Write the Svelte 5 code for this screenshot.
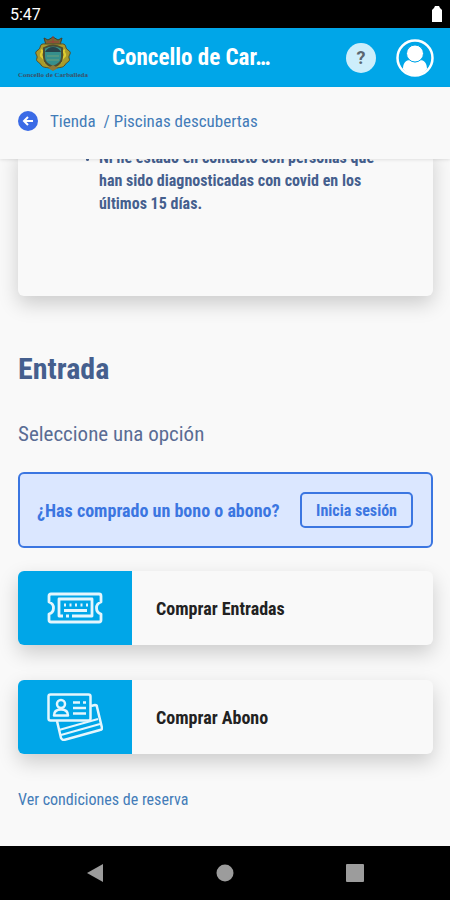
<script>
  let time = "5:47";
  let title = "Concello de Car…";

  let options = [
    { id: "ticket", label: "Comprar Entradas" },
    { id: "pass", label: "Comprar Abono" },
  ];
</script>

<div class="screen">
  <div class="status">
    <span>{time}</span>
    <svg width="10" height="16" viewBox="0 0 10 16" fill="#fff">
      <path d="M3 0h4l1 2 2 2v12H0V4l2-2z" />
    </svg>
  </div>

  <header>
    <a class="logo" href="/" aria-label="Inicio">
      <svg width="40" height="36" viewBox="0 0 40 36">
        <path d="M11 2l4 2 5-3 5 3 4-2-2 7H13z" fill="#746b35" stroke="#433f2b" />
        <path d="M14 6h12M20 0v7" stroke="#a33d38" stroke-width="1" />
        <path d="M13 8C5 7 9 12 5 14c-5 3 0 5-1 8-2 4 3 4 4 7 3 4 7 1 12 5 5-4 9-1 12-5 1-3 6-3 4-7-1-3 4-5-1-8-4-2 0-7-8-6z" fill="#a99b2c" stroke="#514d2d" />
        <path d="M8 14c4 2-3 4 1 7s1 5 5 7M32 14c-4 2 3 4-1 7s-1 5-5 7" fill="none" stroke="#e0cd32" stroke-width="2" />
        <path d="M11 12q9-5 18 0v9q0 7-9 10-9-3-9-10z" fill="#368f8c" stroke="#4c4c32" stroke-width="2" />
        <path d="M12 16q3-5 8-5t8 5z" fill="#26434b" />
        <path d="M14 20h12M14 24h12" stroke="#6ea07a" />
        <path d="M15 32l5-3 5 3-5 3z" fill="#8d7938" />
      </svg>
      <span>Concello de Carballeda</span>
    </a>
    <h1>{title}</h1>
    <button class="help" aria-label="Ayuda">?</button>
    <button class="user" aria-label="Mi cuenta">
      <svg width="38" height="38" viewBox="0 0 38 38">
        <circle cx="19" cy="19" r="17.5" fill="none" stroke="#fff" stroke-width="2.5" />
        <path d="M7 30c0-6 3-9 7-9 3 3 7 3 10 0 4 0 7 3 7 9-6 8-18 8-24 0z" fill="#fff" />
        <circle cx="19" cy="14.500" r="8.500" fill="#fff" stroke="#00a6e8" stroke-width="1" />
      </svg>
    </button>
  </header>

  <nav class="crumbs">
    <button class="back" aria-label="Volver">
      <svg width="20" height="20" viewBox="0 0 20 20">
        <circle cx="10" cy="10" r="10" fill="#3b6be6" />
        <path d="M15 10H6M10 6l-4 4 4 4" fill="none" stroke="#fff" stroke-width="2" />
      </svg>
    </button>
    <a href="/tienda">Tienda</a>
    <span>/ Piscinas descubertas</span>
  </nav>

  <main>
    <section class="info">
      <ul>
        <li>Ni he estado en contacto con personas que han sido diagnosticadas con covid en los últimos 15 días.</li>
      </ul>
    </section>

    <h2>Entrada</h2>
    <p class="hint">Seleccione una opción</p>

    <div class="login">
      <span>¿Has comprado un bono o abono?</span>
      <button>Inicia sesión</button>
    </div>

    {#each options as option (option.id)}
      <button class="option">
        <span class="icon">
          {#if option.id === "ticket"}
            <svg width="56" height="32" viewBox="0 0 56 32" fill="none" stroke="#e4f6fd" stroke-width="2.800" stroke-linejoin="round">
              <path d="M4 2h48q2 0 2 2v6c-6 2-6 10 0 12v6q0 2-2 2H4q-2 0-2-2v-6c6-2 6-10 0-12V4q0-2 2-2z" />
              <path d="M16 24h-4V7h33v17H25M19 24h3" />
              <path d="M17 13h25" stroke-dasharray="2 3.500" />
              <path d="M17 18.500h23" />
            </svg>
          {:else}
            <svg width="56" height="48" viewBox="0 0 56 48" fill="none" stroke="#e4f6fd" stroke-width="2.500" stroke-linejoin="round">
              <rect x="1.500" y="1.500" width="42" height="26" rx="2" />
              <path d="M7 22.500c0-4 3-6 7-6s7 2 7 6z" />
              <circle cx="14" cy="11" r="4" />
              <path d="M26 9.500h7M36 9.500h3M26 15h13M26 20.500h13" />
              <path d="M44 13l4-1q2 0 2 2l5 21q0 2-2 2l-36 10q-2 0-3-2l-4-17" />
              <path d="M12 37l39-11M14 42l39-11" stroke-width="2" />
            </svg>
          {/if}
        </span>
        <span class="label">{option.label}</span>
      </button>
    {/each}

    <a class="terms" href="/condiciones">Ver condiciones de reserva</a>
  </main>

  <div class="android">
    <button aria-label="Atrás">
      <svg width="18" height="20" viewBox="0 0 18 20"><path d="M17 1v18L1 10z" fill="#9c9c9c" /></svg>
    </button>
    <button aria-label="Inicio">
      <svg width="18" height="18" viewBox="0 0 18 18"><circle cx="9" cy="9" r="8.500" fill="#9c9c9c" /></svg>
    </button>
    <button aria-label="Recientes">
      <svg width="18" height="18" viewBox="0 0 18 18"><rect width="18" height="18" rx="1" fill="#9c9c9c" /></svg>
    </button>
  </div>
</div>

<style>
:global(body) {
  margin: 0;
  background: #f9f9f9;
}

.screen {
  display: flex;
  flex-direction: column;
  height: 100vh;
  overflow: hidden;
  font-family: "Roboto Condensed", "Liberation Sans Narrow", Roboto, sans-serif;
  color: #455f8e;
}

button {
  padding: 0;
  border: 0;
  background: none;
  font-family: inherit;
  cursor: pointer;
}

a {
  color: #437cb8;
  text-decoration: none;
}

svg {
  display: block;
}

.status {
  display: flex;
  align-items: center;
  justify-content: space-between;
  flex: none;
  height: 28px;
  padding: 0 8px 0 10px;
  background: #000;
  color: #fff;
  font-family: Roboto, sans-serif;
  font-size: 16px;
}

header {
  display: flex;
  align-items: center;
  flex: none;
  height: 59px;
  padding: 0 16px 0 18px;
  background: #00a6e8;
}

.logo {
  display: flex;
  flex-direction: column;
  align-items: center;
  width: 70px;
  color: #3c5269;
  font-family: "Liberation Serif", serif;
  font-size: 7px;
  font-weight: bold;
  line-height: 7px;
  white-space: nowrap;
}

h1 {
  flex: 1;
  margin: 0 0 0 24px;
  color: #fff;
  font-size: 23px;
  line-height: 32px;
  white-space: nowrap;
}

.help {
  width: 30px;
  height: 30px;
  margin-right: 20px;
  border-radius: 50%;
  background: #cdeefb;
  color: #5b6770;
  font-family: Roboto, sans-serif;
  font-size: 18px;
  font-weight: bold;
}

.crumbs {
  display: flex;
  align-items: center;
  flex: none;
  z-index: 1;
  height: 72px;
  padding: 0 18px 4px;
  box-sizing: border-box;
  background: #f9f9f9;
  box-shadow: 0 1px 3px rgba(0, 0, 0, 0.1);
  color: #437cb8;
  font-size: 17px;
}

.crumbs a {
  margin: 0 8px 0 12px;
}

main {
  flex: 1;
  min-height: 0;
  padding: 0 17px 0 18px;
  overflow: hidden;
}

.info {
  height: 150px;
  margin-top: -13px;
  border-radius: 6px;
  box-shadow: 0 8px 20px rgba(0, 0, 0, 0.18);
}

ul {
  margin: 0;
  padding: 0 56px 0 81px;
  font-size: 16px;
  font-weight: bold;
  line-height: 23px;
}

li::marker {
  font-size: 10px;
}

h2 {
  margin: 55px 0 0;
  font-size: 30px;
  line-height: 36px;
}

.hint {
  margin: 34px 0 0;
  color: #5a6c94;
  font-size: 21px;
  line-height: 26px;
}

.login {
  display: flex;
  align-items: center;
  justify-content: space-between;
  height: 76px;
  margin: 25px 0 23px;
  padding: 0 18px 0 17px;
  box-sizing: border-box;
  border: 2px solid #3b76e1;
  border-radius: 6px;
  background: #dbe7ff;
  color: #3b76e1;
  font-size: 18px;
  font-weight: bold;
}

.login button {
  height: 36px;
  padding: 0 14px;
  border: 2px solid #3b76e1;
  border-radius: 5px;
  color: #3b76e1;
  font-size: 16px;
  font-weight: bold;
}

.option {
  display: flex;
  width: 100%;
  height: 74px;
  margin-bottom: 35px;
  overflow: hidden;
  border-radius: 6px;
  background: #f9f9f9;
  box-shadow: 0 8px 20px rgba(0, 0, 0, 0.18);
}

.icon {
  display: flex;
  align-items: center;
  justify-content: center;
  width: 114px;
  height: 100%;
  background: #00a6e8;
}

.label {
  align-self: center;
  margin-left: 24px;
  color: #222;
  font-size: 18px;
  font-weight: bold;
}

.terms {
  font-size: 16px;
  line-height: 22px;
}

.android {
  display: flex;
  align-items: center;
  justify-content: space-around;
  flex: none;
  height: 54px;
  padding: 0 30px;
  background: #000;
}
</style>
